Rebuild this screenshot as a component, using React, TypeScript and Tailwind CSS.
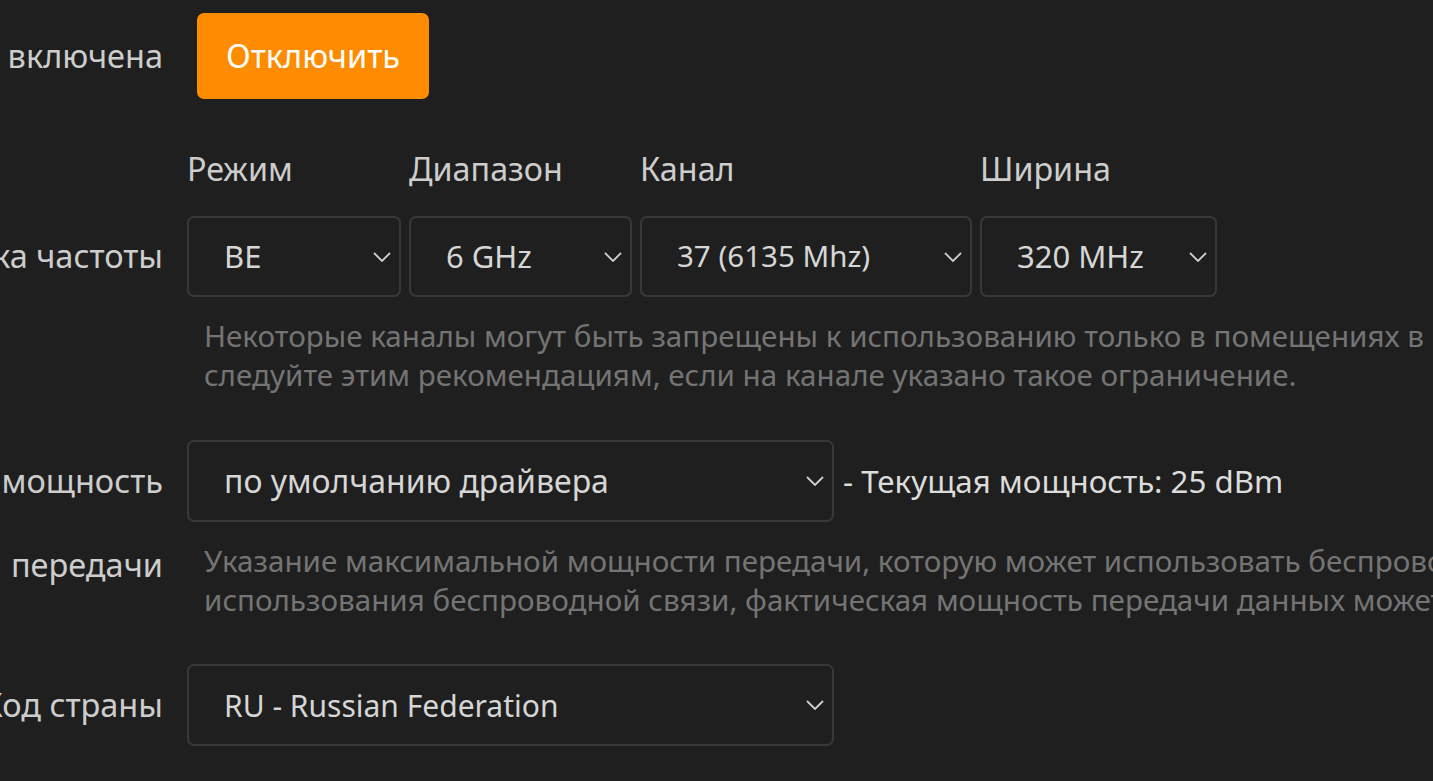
import React from 'react';

const Chevron: React.FC = () => (
  <svg width="18" height="10" viewBox="0 0 18 10" fill="none" className="shrink-0">
    <path d="M1 1l8 8 8-8" stroke="#cfcfcf" strokeWidth="1.8" />
  </svg>
);

const Select: React.FC<{ value: string; className?: string }> = ({ value, className }) => (
  <div
    className={`flex items-center justify-between rounded-[7px] border-2 border-[#383838] bg-[#1f1f1f] pl-[35px] pr-[8px] text-[#d6d6d6] ${className ?? ''}`}
  >
    <span className="whitespace-nowrap">{value}</span>
    <Chevron />
  </div>
);

const Label: React.FC<{ children: React.ReactNode; className?: string }> = ({ children, className }) => (
  <div className={`flex w-[163px] shrink-0 justify-end whitespace-nowrap text-[32.5px] text-[#cdcdcd] ${className ?? ''}`}>
    {children}
  </div>
);

export default function App() {
  return (
    <div className="h-screen w-screen overflow-hidden bg-[#1f1f1f] font-['Noto_Sans',sans-serif]">
      {/* Статус */}
      <div className="flex items-center pt-[13px]">
        <Label>Беспроводная сеть включена</Label>
        <button className="ml-[34px] flex h-[86px] w-[232px] items-center justify-center rounded-[7px] bg-[#ff8c00] text-[32.5px] text-white">
          Отключить
        </button>
      </div>

      {/* Частота */}
      <div className="mt-[47px] flex">
        <div className="w-[163px] shrink-0" />
        <div className="ml-[24px] grid grid-cols-[214px_223px_332px_237px] gap-x-[8px] text-[32.3px] text-[#cdcdcd]">
          <div className="leading-[44px]">Режим</div>
          <div className="leading-[44px]">Диапазон</div>
          <div className="leading-[44px]">Канал</div>
          <div className="leading-[44px]">Ширина</div>
        </div>
      </div>
      <div className="mt-[26px] flex items-center">
        <Label>Настройка частоты</Label>
        <div className="ml-[24px] grid grid-cols-[214px_223px_332px_237px] gap-x-[8px]">
          <Select value="BE" className="h-[81px] text-[31px]" />
          <Select value="6 GHz" className="h-[81px] text-[31px]" />
          <Select value="37 (6135 Mhz)" className="h-[81px] text-[29.5px]" />
          <Select value="320 MHz" className="h-[81px] text-[31px]" />
        </div>
      </div>
      <div className="mt-[19px] flex">
        <div className="w-[163px] shrink-0" />
        <div className="ml-[41px] whitespace-nowrap text-[29.6px] leading-[39px] text-[#747474]">
          <div>Некоторые каналы могут быть запрещены к использованию только в помещениях в вашем регионе,</div>
          <div>следуйте этим рекомендациям, если на канале указано такое ограничение.</div>
        </div>
      </div>

      {/* Мощность */}
      <div className="mt-[46px] flex items-center">
        <Label>Максимальная мощность</Label>
        <div className="ml-[24px] flex items-center">
          <Select value="по умолчанию драйвера" className="h-[82px] w-[647px] text-[32px]" />
          <span className="ml-[9px] whitespace-nowrap text-[31.3px] text-[#dcdcdc]">- Текущая мощность: 25 dBm</span>
        </div>
      </div>
      <div className="mt-[19px] flex">
        <Label className="pt-[4px] leading-[39px]">передачи</Label>
        <div className="ml-[41px] whitespace-nowrap text-[29.6px] leading-[39px] text-[#747474]">
          <div>Указание максимальной мощности передачи, которую может использовать беспроводная сеть. В зависимости от</div>
          <div>использования беспроводной связи, фактическая мощность передачи данных может отличаться.</div>
        </div>
      </div>

      {/* Страна */}
      <div className="mt-[45px] flex items-center">
        <Label>Код страны</Label>
        <div className="ml-[24px]">
          <Select value="RU - Russian Federation" className="h-[82px] w-[647px] text-[30px]" />
        </div>
      </div>
    </div>
  );
}
